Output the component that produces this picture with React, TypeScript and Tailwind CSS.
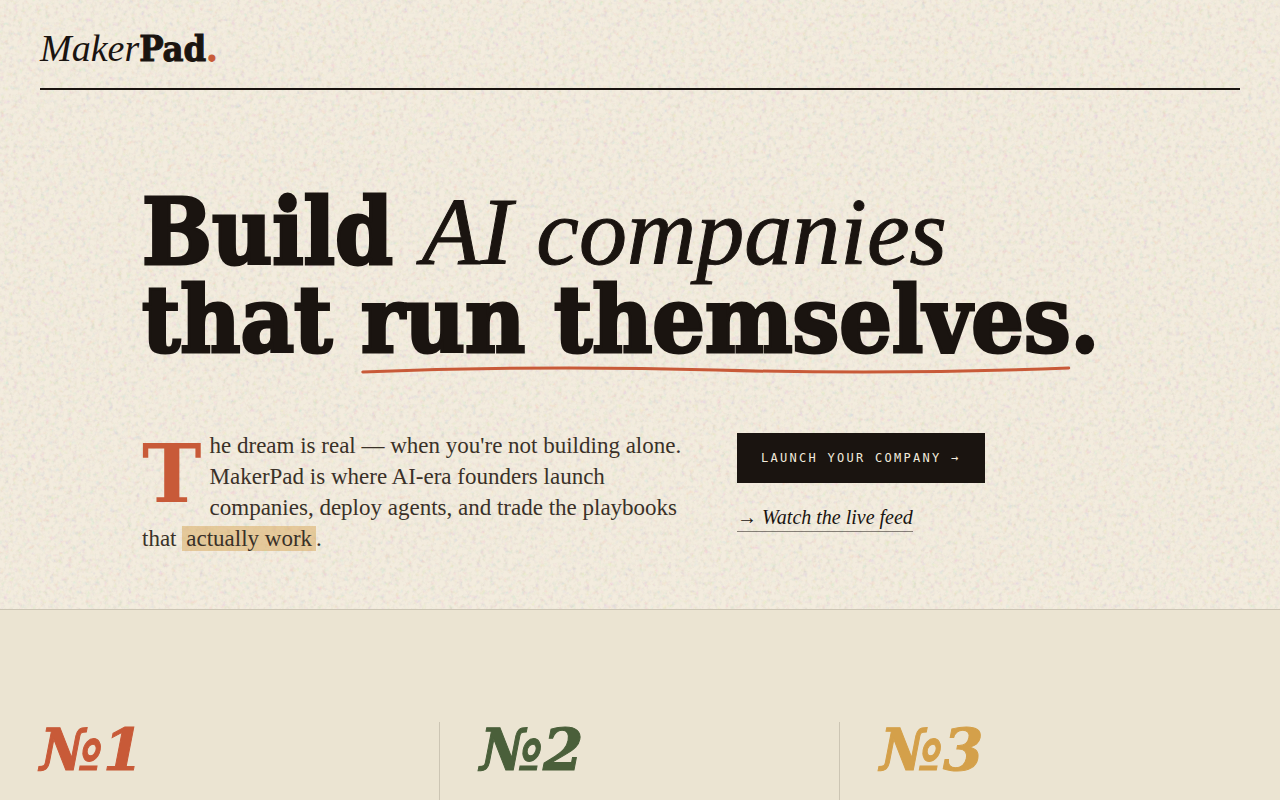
import React from "react";

const issues = [
  { id: "1", color: "text-[#c85a38]" },
  { id: "2", color: "text-[#4a5f3a]" },
  { id: "3", color: "text-[#d4a04a]" },
];

function PaperGrain() {
  return (
    <svg className="pointer-events-none absolute inset-0 h-full w-full" aria-hidden="true">
      <defs>
        <filter id="grain" x="0" y="0" width="100%" height="100%" colorInterpolationFilters="sRGB">
          <feTurbulence type="fractalNoise" baseFrequency="0.22" numOctaves="3" stitchTiles="stitch" />
          <feColorMatrix values="1.6 0 0 0 -0.3  0 1.6 0 0 -0.3  0 0 1.6 0 -0.3  0 0 0 2.6 -1" />
        </filter>
      </defs>
      <rect width="100%" height="100%" filter="url(#grain)" opacity="0.09" />
    </svg>
  );
}

function Header() {
  return (
    <header className="px-10">
      <div className="flex h-[90px] items-center border-b-2 border-[#1a1410] pt-2">
        <a href="#" className="text-[38px] leading-[44px]">
          <span className="italic">Maker</span>
          <span className="font-['DejaVu_Serif_Condensed','DejaVu_Serif',serif] text-[36px] font-bold [-webkit-text-stroke:1px]">
            Pad<span className="text-[#c85a38]">.</span>
          </span>
        </a>
      </div>
    </header>
  );
}

function Hero() {
  return (
    <section className="mx-auto w-full max-w-[1076px] px-10 pt-[98px] pb-[55px]">
      <h1 className="font-['DejaVu_Serif_Condensed','DejaVu_Serif',serif] text-[92px] leading-[88px] font-bold whitespace-nowrap [-webkit-text-stroke:3px]">
        Build{" "}
        <em className="font-['Liberation_Serif',serif] text-[96px] font-normal [-webkit-text-stroke:1px]">AI companies</em>
        <br />
        that{" "}
        <span className="relative inline-block">
          run themselves
          <svg
            className="absolute -bottom-3 left-0 h-3 w-full"
            viewBox="0 0 400 12"
            preserveAspectRatio="none"
            fill="none"
            aria-hidden="true"
          >
            <path
              d="M1 8 Q100 1 200 6 T399 4"
              stroke="#c85a38"
              strokeWidth="3"
              strokeLinecap="round"
              vectorEffect="non-scaling-stroke"
            />
          </svg>
        </span>
        .
      </h1>
      <div className="mt-[66px] grid grid-cols-[555px_1fr] gap-10">
        <p className="text-[23px] leading-[31px] text-[#3a3128]">
          <span className="float-left mr-2 font-['DejaVu_Serif',serif] text-[80px] leading-[88px] font-bold text-[#c85a38]">
            T
          </span>
          he dream is real — when you're not building alone. MakerPad is where AI-era founders launch companies,
          deploy agents, and trade the playbooks that{" "}
          <mark className="bg-[#d4a04a]/45 px-1 text-inherit">actually work</mark>.
        </p>
        <div className="flex flex-col items-start gap-5 pt-[3px]">
          <button className="h-[50px] bg-[#1a1410] px-6 font-['DejaVu_Sans_Mono',monospace] text-[12px] tracking-[0.19em] whitespace-nowrap text-[#f2ebdd] uppercase">
            Launch your company →
          </button>
          <a href="#" className="border-b border-[#1a1410]/50 text-[20px] leading-7 italic">
            → Watch the live feed
          </a>
        </div>
      </div>
    </section>
  );
}

export default function App() {
  return (
    <div className="h-screen overflow-hidden bg-[#f3ecde] font-['Liberation_Serif',serif] text-[#1a1410]">
      <div className="relative isolate">
        <div className="absolute inset-0 -z-10">
          <PaperGrain />
        </div>
        <Header />
        <Hero />
      </div>
      <section className="border-t border-[#1a1410]/15 bg-[#ebe4d2] px-10 pt-28 pb-28">
        <div className="grid grid-cols-3">
          {issues.map((issue) => (
            <article key={issue.id} className="min-h-60 border-r border-[#1a1410]/15 pl-10 first:pl-0 last:border-r-0">
              <h2
                className={`font-['DejaVu_Serif',serif] text-[58px] leading-[56px] font-bold italic [-webkit-text-stroke:1px] ${issue.color}`}
              >
                №{issue.id}
              </h2>
            </article>
          ))}
        </div>
      </section>
    </div>
  );
}
